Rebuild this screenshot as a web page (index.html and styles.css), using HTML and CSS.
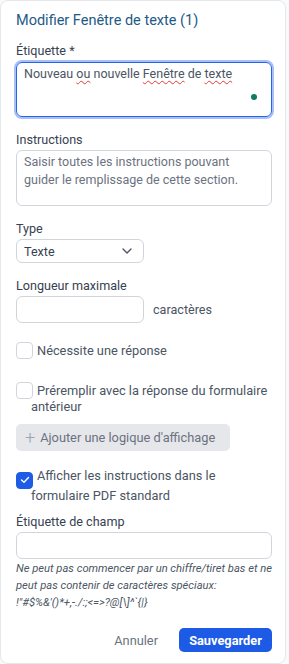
FILE: index.html
```html
<!DOCTYPE html>
<html lang="fr">
<head>
  <meta charset="UTF-8" />
  <title>Modifier Fenêtre de texte</title>
  <link rel="stylesheet" href="styles.css">
</head>
<body>
  <div class="panneau">
    <h2 class="titre">Modifier Fenêtre de texte (1)</h2>

    <div class="champ">
      <label class="etiquette">Étiquette *</label>
      <div class="zone-focus">
        <div class="zone-texte actif"><span>Nouveau <u>ou</u> nouvelle <u>Fenêtre</u> de <u>texte</u></span></div>
        <span class="point"></span>
      </div>
    </div>

    <div class="champ">
      <label class="etiquette">Instructions</label>
      <div class="zone-texte placeholder">Saisir toutes les instructions pouvant guider le remplissage de cette section.</div>
    </div>

    <div class="champ">
      <label class="etiquette">Type</label>
      <div class="selecteur">
        <span>Texte</span>
        <svg width="10" height="6" viewBox="0 0 10 6"><path d="M1 1 L5 5 L9 1" fill="none" stroke="#4b5563" stroke-width="1.4" stroke-linecap="round" stroke-linejoin="round"/></svg>
      </div>
    </div>

    <div class="champ">
      <label class="etiquette">Longueur maximale</label>
      <div class="ligne">
        <div class="entree courte"></div>
        <span class="unite">caractères</span>
      </div>
    </div>

    <div class="case-ligne premiere"><span class="case"></span>Nécessite une réponse</div>

    <div class="case-ligne"><span class="case"></span>Préremplir avec la réponse du formulaire antérieur</div>

    <button class="bouton-logique"><span class="plus">+</span> Ajouter une logique d'affichage</button>

    <div class="case-ligne coche-ligne"><span class="case cochee"><svg width="10" height="8" viewBox="0 0 10 8"><path d="M1.5 4 L4 6.3 L8.5 1.5" fill="none" stroke="#fff" stroke-width="1.4" stroke-linecap="round" stroke-linejoin="round"/></svg></span>Afficher les instructions dans le formulaire PDF standard</div>

    <div class="champ">
      <label class="etiquette">Étiquette de champ</label>
      <div class="entree"></div>
      <p class="aide">Ne peut pas commencer par un chiffre/tiret bas et ne peut pas contenir de caractères spéciaux: !"#$%&amp;'()*+,-./:;&lt;=&gt;?@[\]^`{|}</p>
    </div>

    <div class="actions">
      <button class="annuler">Annuler</button>
      <button class="sauver">Sauvegarder</button>
    </div>
  </div>
</body>
</html>
```

FILE: styles.css
```css
body {
  margin: 0;
  font-family: Roboto, "Liberation Sans", sans-serif;
  background: #f9fafb;
  color: #374151;
}

.panneau {
  width: 286px;
  min-height: 100vh;
  padding: 11px 13px 0 15px;
  box-sizing: border-box;
  background: #fff;
  border: 1px solid #e5e7eb;
  border-radius: 8px;
}

.titre {
  margin: 0 0 13px 0;
  font-size: 14.5px;
  line-height: 18px;
  font-weight: 400;
  color: #1e5a86;
}

.champ {
  margin-bottom: 15px;
}

.etiquette {
  display: block;
  font-size: 12.6px;
  line-height: 15px;
  color: #374151;
  margin-bottom: 3px;
}

.zone-focus {
  position: relative;
  padding-top: 1px;
}

.zone-texte {
  height: 56px;
  box-sizing: border-box;
  border: 1px solid #d1d5db;
  border-radius: 6px;
  padding: 2px 7px;
  font-size: 12.5px;
  line-height: 18px;
  color: #4b5563;
}

.zone-texte.actif {
  height: 55px;
  border: 1.5px solid #2563eb;
  box-shadow: 0 0 0 2px #a9c0f6;
  padding-top: 2px;
}

.zone-texte u {
  text-decoration: underline wavy #e53935;
  text-decoration-thickness: 1px;
  text-underline-offset: 2px;
}

.zone-texte.placeholder {
  color: #6b7280;
}

.point {
  position: absolute;
  right: 15px;
  top: 33px;
  width: 6px;
  height: 6px;
  border-radius: 50%;
  background: #0f7b63;
}

.selecteur {
  width: 128px;
  height: 24px;
  box-sizing: border-box;
  border: 1px solid #d1d5db;
  border-radius: 6px;
  padding: 0 11px 0 7px;
  display: flex;
  align-items: center;
  justify-content: space-between;
  font-size: 12.6px;
  color: #374151;
}

.ligne {
  display: flex;
  align-items: center;
  gap: 9px;
}

.entree {
  height: 27px;
  box-sizing: border-box;
  border: 1px solid #d1d5db;
  border-radius: 6px;
}

.entree.courte {
  width: 128px;
}

.unite {
  font-size: 12.6px;
  color: #4b5563;
}

.case-ligne {
  padding-left: 15px;
  text-indent: -15px;
  margin-top: 23px;
  font-size: 12.8px;
  line-height: 15px;
  color: #4b5563;
}

.case-ligne.premiere {
  margin-top: 19px;
}

.case {
  display: inline-flex;
  vertical-align: -4px;
  text-indent: 0;
  box-sizing: border-box;
  width: 17px;
  height: 17px;
  border: 1px solid #d1d5db;
  border-radius: 4px;
  margin-right: 4px;
  align-items: center;
  justify-content: center;
}

.case.cochee {
  background: #1f5ce6;
  border-color: #1f5ce6;
}

.bouton-logique {
  margin-top: 10px;
  display: flex;
  align-items: center;
  gap: 5px;
  width: 214px;
  height: 27px;
  padding: 0 9px;
  border: none;
  border-radius: 5px;
  background: #e5e7eb;
  color: #6b7280;
  font-family: inherit;
  font-size: 12.8px;
}

.plus {
  font-size: 18px;
  font-weight: 300;
  line-height: 1;
  color: #9ca3af;
}

.coche-ligne {
  margin-top: 18px;
  line-height: 14.5px;
  margin-bottom: 11px;
}

.aide {
  margin: 1px 0 0;
  font-size: 11.2px;
  font-style: italic;
  line-height: 17px;
  color: #4b5563;
}

.actions {
  display: flex;
  justify-content: flex-end;
  align-items: center;
  gap: 21px;
  margin-top: 17px;
}

.annuler {
  border: none;
  background: none;
  font-family: inherit;
  font-size: 12.8px;
  color: #6b7280;
  padding: 0;
}

.sauver {
  border: none;
  background: #1d5be6;
  color: #fff;
  font-family: inherit;
  font-size: 12.8px;
  font-weight: 700;
  height: 24px;
  width: 93px;
  padding: 0;
  border-radius: 5px;
}
```
